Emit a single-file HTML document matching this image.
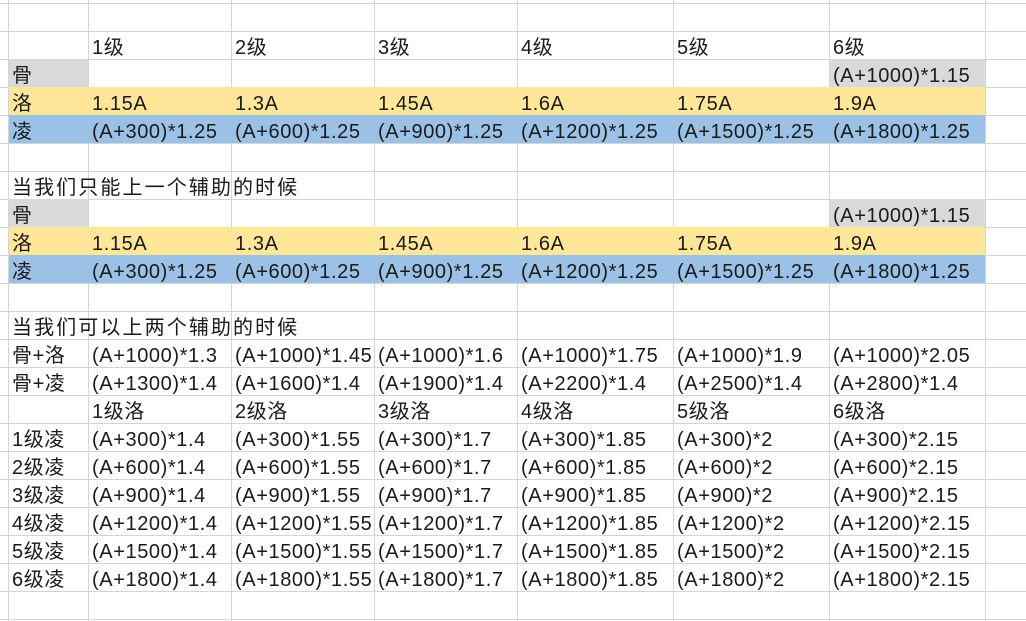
<!DOCTYPE html>
<html><head><meta charset="utf-8"><style>
html,body{margin:0;padding:0;background:#fff;}
#s{position:relative;width:1026px;height:621px;overflow:hidden;
background:repeating-linear-gradient(to bottom,transparent 0 3px,#d4d4d4 3px 4px,transparent 4px 28px);
font-family:"Liberation Sans","Noto Sans CJK SC",sans-serif;font-size:20px;color:#1a1a1a;letter-spacing:0.6px;}
.v{position:absolute;top:0;width:1px;height:621px;background:#d4d4d4;}
.f{position:absolute;height:28px;}
.g{background:#d9d9d9}.y{background:#ffe699}.b{background:#9bc2e6}
.r{position:absolute;left:0;width:1026px;height:28px;}
.r span{position:absolute;top:3px;line-height:28px;white-space:nowrap;}
.c0{left:12px}.c1{left:92px}.c2{left:235px}.c3{left:378px}.c4{left:521px}.c5{left:677px}.c6{left:833px}
.cj{letter-spacing:2.1px}
</style></head><body><div id="s">
<div class="v" style="left:8px"></div><div class="v" style="left:88px"></div><div class="v" style="left:231px"></div><div class="v" style="left:374px"></div><div class="v" style="left:517px"></div><div class="v" style="left:673px"></div><div class="v" style="left:829px"></div><div class="v" style="left:985px"></div>

<div class="f g" style="top:59px;left:9px;width:79px"></div>
<div class="f g" style="top:59px;left:830px;width:155px"></div>
<div class="f y" style="top:87px;left:9px;width:976px"></div>
<div class="f b" style="top:115px;left:9px;width:976px"></div>
<div class="f g" style="top:199px;left:9px;width:79px"></div>
<div class="f g" style="top:199px;left:830px;width:155px"></div>
<div class="f y" style="top:227px;left:9px;width:976px"></div>
<div class="f b" style="top:255px;left:9px;width:976px"></div>

<div class="r" style="top:31px"><span class="c1">1级</span><span class="c2">2级</span><span class="c3">3级</span><span class="c4">4级</span><span class="c5">5级</span><span class="c6">6级</span></div>
<div class="r" style="top:59px"><span class="c0">骨</span><span class="c6">(A+1000)*1.15</span></div>
<div class="r" style="top:87px"><span class="c0">洛</span><span class="c1">1.15A</span><span class="c2">1.3A</span><span class="c3">1.45A</span><span class="c4">1.6A</span><span class="c5">1.75A</span><span class="c6">1.9A</span></div>
<div class="r" style="top:115px"><span class="c0">凌</span><span class="c1">(A+300)*1.25</span><span class="c2">(A+600)*1.25</span><span class="c3">(A+900)*1.25</span><span class="c4">(A+1200)*1.25</span><span class="c5">(A+1500)*1.25</span><span class="c6">(A+1800)*1.25</span></div>
<div class="r" style="top:171px"><span class="c0 cj">当我们只能上一个辅助的时候</span></div>
<div class="r" style="top:199px"><span class="c0">骨</span><span class="c6">(A+1000)*1.15</span></div>
<div class="r" style="top:227px"><span class="c0">洛</span><span class="c1">1.15A</span><span class="c2">1.3A</span><span class="c3">1.45A</span><span class="c4">1.6A</span><span class="c5">1.75A</span><span class="c6">1.9A</span></div>
<div class="r" style="top:255px"><span class="c0">凌</span><span class="c1">(A+300)*1.25</span><span class="c2">(A+600)*1.25</span><span class="c3">(A+900)*1.25</span><span class="c4">(A+1200)*1.25</span><span class="c5">(A+1500)*1.25</span><span class="c6">(A+1800)*1.25</span></div>
<div class="r" style="top:311px"><span class="c0 cj">当我们可以上两个辅助的时候</span></div>
<div class="r" style="top:339px"><span class="c0">骨+洛</span><span class="c1">(A+1000)*1.3</span><span class="c2">(A+1000)*1.45</span><span class="c3">(A+1000)*1.6</span><span class="c4">(A+1000)*1.75</span><span class="c5">(A+1000)*1.9</span><span class="c6">(A+1000)*2.05</span></div>
<div class="r" style="top:367px"><span class="c0">骨+凌</span><span class="c1">(A+1300)*1.4</span><span class="c2">(A+1600)*1.4</span><span class="c3">(A+1900)*1.4</span><span class="c4">(A+2200)*1.4</span><span class="c5">(A+2500)*1.4</span><span class="c6">(A+2800)*1.4</span></div>
<div class="r" style="top:395px"><span class="c1">1级洛</span><span class="c2">2级洛</span><span class="c3">3级洛</span><span class="c4">4级洛</span><span class="c5">5级洛</span><span class="c6">6级洛</span></div>
<div class="r" style="top:423px"><span class="c0">1级凌</span><span class="c1">(A+300)*1.4</span><span class="c2">(A+300)*1.55</span><span class="c3">(A+300)*1.7</span><span class="c4">(A+300)*1.85</span><span class="c5">(A+300)*2</span><span class="c6">(A+300)*2.15</span></div>
<div class="r" style="top:451px"><span class="c0">2级凌</span><span class="c1">(A+600)*1.4</span><span class="c2">(A+600)*1.55</span><span class="c3">(A+600)*1.7</span><span class="c4">(A+600)*1.85</span><span class="c5">(A+600)*2</span><span class="c6">(A+600)*2.15</span></div>
<div class="r" style="top:479px"><span class="c0">3级凌</span><span class="c1">(A+900)*1.4</span><span class="c2">(A+900)*1.55</span><span class="c3">(A+900)*1.7</span><span class="c4">(A+900)*1.85</span><span class="c5">(A+900)*2</span><span class="c6">(A+900)*2.15</span></div>
<div class="r" style="top:507px"><span class="c0">4级凌</span><span class="c1">(A+1200)*1.4</span><span class="c2">(A+1200)*1.55</span><span class="c3">(A+1200)*1.7</span><span class="c4">(A+1200)*1.85</span><span class="c5">(A+1200)*2</span><span class="c6">(A+1200)*2.15</span></div>
<div class="r" style="top:535px"><span class="c0">5级凌</span><span class="c1">(A+1500)*1.4</span><span class="c2">(A+1500)*1.55</span><span class="c3">(A+1500)*1.7</span><span class="c4">(A+1500)*1.85</span><span class="c5">(A+1500)*2</span><span class="c6">(A+1500)*2.15</span></div>
<div class="r" style="top:563px"><span class="c0">6级凌</span><span class="c1">(A+1800)*1.4</span><span class="c2">(A+1800)*1.55</span><span class="c3">(A+1800)*1.7</span><span class="c4">(A+1800)*1.85</span><span class="c5">(A+1800)*2</span><span class="c6">(A+1800)*2.15</span></div>
</div></body></html>
